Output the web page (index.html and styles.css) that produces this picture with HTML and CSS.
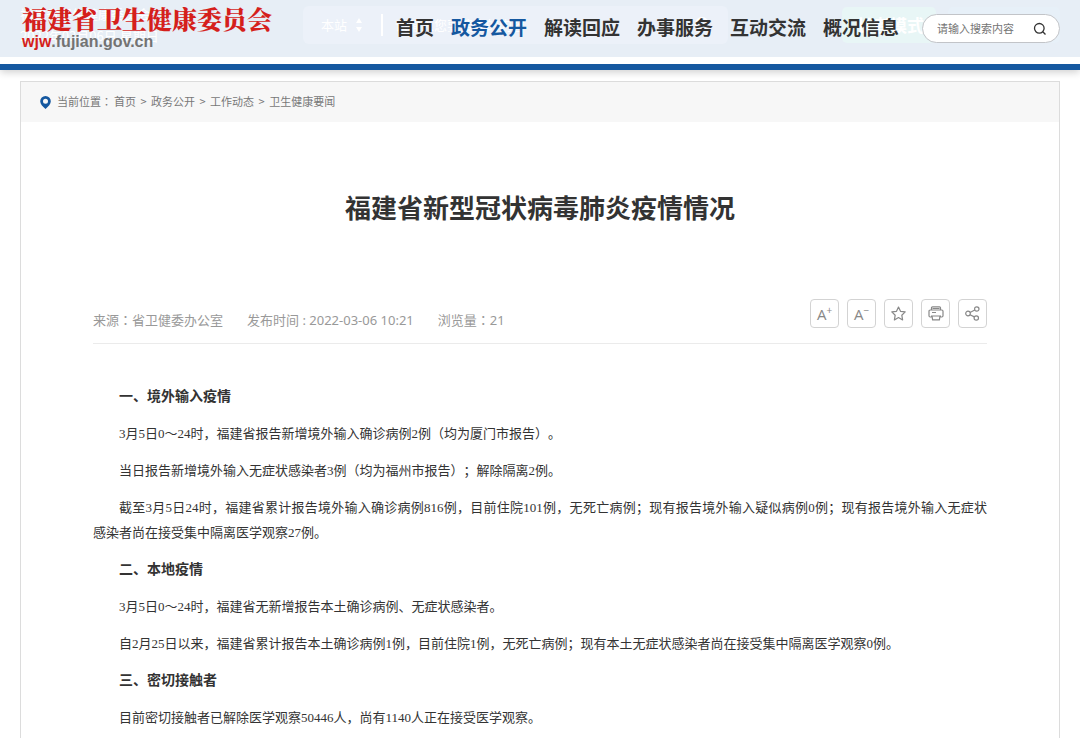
FILE: index.html
```
<!DOCTYPE html>
<html lang="zh-CN">
<head>
<meta charset="utf-8">
<meta name="viewport" content="width=device-width, initial-scale=1">
<title>福建省新型冠状病毒肺炎疫情情况</title>
<link rel="stylesheet" href="styles.css">
</head>
<body>
<header class="site-header">
  <div class="under" aria-hidden="true">
    <div class="under-info"><span>福建省卫生健康委员会</span><span>2022年03月06日 星期日</span></div>
    <div class="under-search">
      <span>本站</span>
      <svg width="8" height="16" viewBox="0 0 8 16"><path d="M4 1l3 5H1zM4 15l3-5H1z" fill="currentColor"/></svg>
      <span class="under-text">请输入您要搜索的内容</span>
      <svg class="under-glass" width="18" height="18" viewBox="0 0 18 18" fill="none" stroke="currentColor" stroke-width="2"><circle cx="8" cy="8" r="6"/><path d="M12 12l5 5"/></svg>
    </div>
    <div class="under-mode">长者模式</div>
    <div class="under-user"></div>
  </div>
  <div class="bar">
    <a class="logo" href="#"><span class="logo-name">福建省卫生健康委员会</span><span class="logo-url"><b>wjw</b>.fujian.gov.cn</span></a>
    <nav class="nav">
      <a href="#">首页</a>
      <a href="#" class="active">政务公开</a>
      <a href="#">解读回应</a>
      <a href="#">办事服务</a>
      <a href="#">互动交流</a>
      <a href="#">概况信息</a>
    </nav>
    <form class="search">
      <input type="text" placeholder="请输入搜索内容" aria-label="请输入搜索内容">
      <button type="button" aria-label="搜索"><svg width="14" height="14" viewBox="0 0 14 14" fill="none" stroke="currentColor" stroke-width="1.3"><circle cx="6.3" cy="6.3" r="4.8"/><path d="M9.8 9.8l2.7 2.7"/></svg></button>
    </form>
  </div>
</header>
<main class="page">
  <nav class="crumbs">
    <svg width="11" height="13" viewBox="0 0 11 13"><path fill="#1558a0" fill-rule="evenodd" d="M5.500 0A5.300 5.300 0 0 0 .2 5.300C.2 8 2.500 10.500 5.500 13c3-2.500 5.300-5 5.300-7.700A5.300 5.300 0 0 0 5.500 0zM5.500 2.800a2.500 2.500 0 1 1 0 5 2.500 2.500 0 0 1 0-5z"/></svg>
    <span class="trail">当前位置<span class="colon" lang="zh-Hant">：</span><a href="#">首页</a> &gt; <a href="#">政务公开</a> &gt; <a href="#">工作动态</a> &gt; <a href="#">卫生健康要闻</a></span>
  </nav>
  <div class="content">
    <h1>福建省新型冠状病毒肺炎疫情情况</h1>
    <div class="meta">
      <div class="facts"><span>来源<span class="colon" lang="zh-Hant">：</span>省卫健委办公室</span><span>发布时间 : 2022-03-06 10:21</span><span>浏览量<span class="colon" lang="zh-Hant">：</span>21</span></div>
      <div class="tools">
        <button type="button" aria-label="放大字号">A<sup>+</sup></button>
        <button type="button" aria-label="缩小字号">A<sup>−</sup></button>
        <button type="button" aria-label="收藏"><svg width="15" height="15" viewBox="0 0 15 15"><path d="M7.500 1l2 4.300 4.700.6-3.400 3.300.8 4.700-4.100-2.300-4.100 2.300.8-4.700L.8 5.900l4.700-.6z"/></svg></button>
        <button type="button" aria-label="打印"><svg width="16" height="15" viewBox="0 0 16 15"><path d="M3.500 4V1.800q0-1 1-1h7q1 0 1 1V4M3.500 11H2.200Q1 11 1 9.800V5.200Q1 4 2.200 4h11.600Q15 4 15 5.200v4.600q0 1.200-1.200 1.200h-1.300M3 10h10M4 10l.6 3.900h6.800L12 10M4 6.500h4M4.500 2.500h7"/></svg></button>
        <button type="button" aria-label="分享"><svg width="15" height="15" viewBox="0 0 15 15"><circle cx="3" cy="7.500" r="2.300"/><circle cx="11.800" cy="3" r="2.200"/><circle cx="11.300" cy="12" r="2.200"/><path d="M5 6.500l4.800-2.500M5 8.700l4.300 2.200"/></svg></button>
      </div>
    </div>
    <article class="article">
      <h2>一、境外输入疫情</h2>
      <p>3月5日0～24时，福建省报告新增境外输入确诊病例2例（均为厦门市报告）。</p>
      <p>当日报告新增境外输入无症状感染者3例（均为福州市报告）；解除隔离2例。</p>
      <p>截至3月5日24时，福建省累计报告境外输入确诊病例816例，目前住院101例，无死亡病例；现有报告境外输入疑似病例0例；现有报告境外输入无症状<span class="keep">感染者</span>尚在接受集中隔离医学观察27例。</p>
      <h2>二、本地疫情</h2>
      <p>3月5日0～24时，福建省无新增报告本土确诊病例、无症状感染者。</p>
      <p>自2月25日以来，福建省累计报告本土确诊病例1例，目前住院1例，无死亡病例；现有本土无症状感染者尚在接受集中隔离医学观察0例。</p>
      <h2>三、密切接触者</h2>
      <p>目前密切接触者已解除医学观察50446人，尚有1140人正在接受医学观察。</p>
    </article>
  </div>
</main>
</body>
</html>
```
FILE: styles.css
```
* { box-sizing: border-box; }
body {
  margin: 0;
  min-height: 100vh;
  display: flex;
  flex-direction: column;
  background: #fff;
  color: #333;
  font-family: "Noto Sans", "Noto Sans CJK SC", sans-serif;
  text-spacing-trim: space-all;
}
a { color: inherit; text-decoration: none; }
.colon { font-family: "Noto Sans CJK TC", sans-serif; line-height: 1; }
.keep { white-space: nowrap; }

.site-header {
  position: relative;
  height: 70px;
  padding-bottom: 7px;
  border-bottom: 6px solid #1558a0;
  box-shadow: 0 2px 8px rgba(0, 0, 0, .2);
}
.bar {
  position: relative;
  display: flex;
  align-items: center;
  height: 57px;
  padding: 0 20px 0 22px;
}
.under {
  position: absolute;
  inset: 0 0 7px;
  display: flex;
  align-items: center;
  padding: 0 20px 7px;
  background: #e7eef6;
  color: #fff;
  font: 13px/22px "Noto Sans CJK SC", sans-serif;
}
.under-info { display: flex; flex-direction: column; width: 283px; }
.under-search {
  display: flex;
  align-items: center;
  gap: 8px;
  width: 425px;
  height: 38px;
  padding-left: 18px;
  border-radius: 6px;
  background: #ecf1f9;
}
.under-text { border-left: 2px solid #fff; margin-left: 10px; padding-left: 12px; }
.under-glass { margin-left: auto; margin-right: 16px; }
.under-mode {
  width: 94px;
  height: 36px;
  margin-left: auto;
  padding-left: 14px;
  border-radius: 5px;
  background: #e8f6f6;
  font-size: 17px;
  font-weight: 700;
  line-height: 36px;
  white-space: nowrap;
}
.under-user { width: 112px; height: 36px; margin-left: 12px; border-radius: 5px; background: #e7f0f8; }

.logo { display: flex; flex-direction: column; color: #d51f1c; white-space: nowrap; }
.logo-name { font: 900 25px/26px "Noto Serif CJK SC", "Noto Sans CJK SC", serif; }
.logo-url { font: 700 16px/22px "Liberation Sans", sans-serif; color: #737373; }
.logo-url b { color: #d51f1c; }

.nav {
  display: flex;
  gap: 17px;
  margin-left: auto;
  padding-bottom: 4px;
  font: 700 19px/28px "Noto Sans CJK SC", sans-serif;
  white-space: nowrap;
}
.nav .active { color: #1558a0; }
.search {
  display: flex;
  align-items: center;
  width: 138px;
  height: 29px;
  margin-left: 23px;
  padding: 0 12px 0 14px;
  border: 1px solid #c2c4c8;
  border-radius: 15px;
  background: #fff;
}
.search input {
  flex: 1;
  min-width: 0;
  padding: 0 0 2px;
  border: 0;
  outline: 0;
  background: none;
  font: 11px/20px "Noto Sans CJK SC", sans-serif;
}
.search input::placeholder { color: #757575; opacity: 1; }
.search button { display: flex; padding: 0; border: 0; background: none; color: #333; }

.page {
  flex: 1;
  margin: 11px 20px 0;
  border: 1px solid #dcdcdc;
  border-bottom: 0;
}
.crumbs {
  display: flex;
  align-items: center;
  gap: 6px;
  height: 40px;
  padding: 0 19px;
  background: #f7f7f7;
  color: #777;
  font: 11px/20px "Noto Sans CJK SC", sans-serif;
}
.trail { padding-bottom: 2px; }
.trail a { margin: 0 2px; }
.content { padding: 65px 72px 0; }
h1 { margin: 0 0 72px; font: 700 26px/40px "Noto Sans CJK SC", sans-serif; text-align: center; }
.meta {
  display: flex;
  align-items: center;
  justify-content: space-between;
  padding-bottom: 15px;
  border-bottom: 1px solid #ebebeb;
  color: #999;
  font-size: 13px;
}
.facts { display: flex; gap: 24px; padding-top: 14px; line-height: 15px; }
.tools { display: flex; gap: 8px; }
.tools button {
  display: flex;
  align-items: center;
  justify-content: center;
  width: 29px;
  height: 29px;
  padding: 0;
  border: 1px solid #d3d3d3;
  border-radius: 4px;
  background: #fff;
  color: #888;
  font: 15px/20px "Open Sans", sans-serif;
}
.tools sup { align-self: flex-start; font-size: 10px; line-height: 20px; }
.tools svg { fill: none; stroke: #888; stroke-width: 1.2; stroke-linejoin: round; }

.article {
  padding-top: 40px;
  font: 13px/25px "Liberation Serif", "Noto Sans CJK SC", serif;
  text-align: justify;
}
.article p, .article h2 { margin: 0 0 12px; text-indent: 26px; }
.article h2 { font-size: 14px; line-height: 25px; font-weight: 700; }
.article > :last-child { margin-bottom: 0; }
```
